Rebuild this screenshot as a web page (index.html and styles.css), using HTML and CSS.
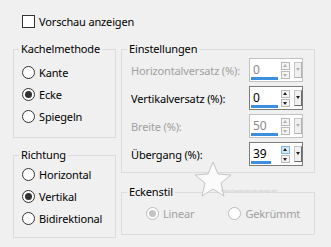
FILE: index.html
```html
<!DOCTYPE html>
<html lang="de">
<head>
    <meta charset="UTF-8">
    <title>Kacheln</title>
    <link rel="stylesheet" href="styles.css">
</head>
<body>
    <div class="dialog">
        <label class="check-row">
            <span class="box"></span>
            <span>Vorschau anzeigen</span>
        </label>

        <div class="columns">
            <div class="col-left">
                <fieldset class="group tiling">
                    <legend>Kachelmethode</legend>
                    <div class="inner">
                        <div class="radio-row"><span class="radio"></span>Kante</div>
                        <div class="radio-row"><span class="radio on"></span>Ecke</div>
                        <div class="radio-row"><span class="radio"></span>Spiegeln</div>
                    </div>
                </fieldset>

                <fieldset class="group direction">
                    <legend>Richtung</legend>
                    <div class="inner">
                        <div class="radio-row"><span class="radio"></span>Horizontal</div>
                        <div class="radio-row"><span class="radio on"></span>Vertikal</div>
                        <div class="radio-row"><span class="radio"></span>Bidirektional</div>
                    </div>
                </fieldset>
            </div>

            <div class="col-right">
                <fieldset class="group settings">
                    <legend>Einstellungen</legend>
                    <div class="inner">
                        <div class="setting disabled">
                            <span class="label">Horizontalversatz (%):</span>
                            <div class="spin">
                                <div class="field"><span class="val">0</span><span class="bar" style="width:27px"></span></div>
                                <div class="arrows"><span class="up"></span><span class="down"></span></div>
                                <div class="drop"></div>
                            </div>
                        </div>

                        <div class="setting">
                            <span class="label">Vertikalversatz (%):</span>
                            <div class="spin">
                                <div class="field"><span class="val">0</span><span class="bar" style="width:27px"></span></div>
                                <div class="arrows"><span class="up"></span><span class="down"></span></div>
                                <div class="drop"></div>
                            </div>
                        </div>

                        <div class="setting disabled">
                            <span class="label">Breite (%):</span>
                            <div class="spin">
                                <div class="field"><span class="val">50</span><span class="bar" style="width:27px"></span></div>
                                <div class="arrows"><span class="up"></span><span class="down"></span></div>
                                <div class="drop"></div>
                            </div>
                        </div>

                        <div class="setting">
                            <span class="label">Übergang (%):</span>
                            <div class="spin">
                                <div class="field"><span class="val">39</span><span class="bar" style="width:20px"></span></div>
                                <div class="arrows"><span class="up hot"></span><span class="down"></span></div>
                                <div class="drop"></div>
                            </div>
                        </div>
                    </div>
                </fieldset>

                <fieldset class="group corner">
                    <legend>Eckenstil</legend>
                    <div class="inner corner-row">
                        <div class="radio-row off"><span class="radio on"></span>Linear</div>
                        <div class="radio-row off"><span class="radio"></span>Gekrümmt</div>
                    </div>
                </fieldset>
            </div>
        </div>

        <!-- Wasserzeichen -->
        <div class="mark">
            <svg width="40" height="38" viewBox="0 0 40 38">
                <polygon points="20,2 25,14 38,15 28,23 31,36 20,29 9,36 12,23 2,15 15,14"
                         fill="#fbfbfb" stroke="#c4c4c4" stroke-width="1"/>
            </svg>
            <span class="mark-text">https://www.tutorials-design.de/</span>
        </div>
    </div>
</body>
</html>
```

FILE: styles.css
```css
body {
    margin: 0;
    background-color: #f0f0f0;
    font-family: "Noto Sans", sans-serif;
    font-size: 11px;
    letter-spacing: -0.15px;
    color: #000;
}
.dialog {
    position: relative;
    padding: 14px 0 0 13px;
}
.check-row {
    display: flex;
    align-items: center;
    gap: 4px;
    height: 14px;
    margin-left: 9px;
}
.box {
    width: 11px;
    height: 11px;
    border: 1px solid #333;
    background-color: #fff;
}
.columns {
    display: flex;
    gap: 5px;
    margin-top: 13px;
}
.col-left {
    width: 103px;
}
.col-right {
    width: 194px;
}
.group {
    margin: 0;
    border: 1px solid #dcdcdc;
    padding: 0;
}
.group legend {
    padding: 0 2px;
    margin-left: 5px;
    line-height: 16px;
}
.tiling .inner {
    padding: 4px 0 10px 8px;
}
.direction {
    margin-top: 9px;
}
.direction .inner {
    padding: 0 0 8px 8px;
}
.radio-row {
    display: flex;
    align-items: center;
    gap: 4px;
    height: 22px;
}
.radio {
    width: 11px;
    height: 11px;
    border: 1px solid #333;
    border-radius: 50%;
    background-color: #fff;
    display: flex;
    align-items: center;
    justify-content: center;
}
.radio.on::after {
    content: "";
    width: 7px;
    height: 7px;
    border-radius: 50%;
    background-color: #333;
}
.radio-row.off {
    color: #a0a0a0;
}
.radio-row.off .radio {
    border-color: #bcbcbc;
}
.radio-row.off .radio.on::after {
    background-color: #c4c4c4;
}
.settings .inner {
    padding: 1px 11px 6px 9px;
}
.setting {
    display: flex;
    align-items: center;
    justify-content: space-between;
    height: 24px;
    margin-bottom: 4px;
}
.setting:last-child {
    margin-bottom: 0;
}
.setting.disabled .label {
    color: #a0a0a0;
}
.spin {
    display: flex;
    align-items: center;
    width: 52px;
    height: 22px;
    border: 1px solid #7a7a7a;
    background-color: #fff;
}
.setting.disabled .spin {
    border-color: #c2c2c2;
}
.setting.disabled .val {
    color: #8a8a8a;
}
.field {
    position: relative;
    width: 32px;
    height: 22px;
}
.val {
    position: absolute;
    left: 3px;
    top: 3px;
    line-height: 16px;
    font-size: 12px;
    letter-spacing: 0;
}
.bar {
    position: absolute;
    left: 1px;
    bottom: 1px;
    height: 3px;
    background-color: #3d8fe0;
}
.arrows {
    display: flex;
    flex-direction: column;
    gap: 1px;
    margin-left: 1px;
}
.arrows span {
    width: 7px;
    height: 6px;
    border: 1px solid #b9b9b9;
    background-color: #f4f4f4;
    position: relative;
}
.arrows span.hot {
    background-color: #d8eaf9;
    border-color: #7eb4ea;
}
.arrows span::after {
    content: "";
    position: absolute;
    left: 1px;
    border-left: 2.5px solid transparent;
    border-right: 2.5px solid transparent;
}
.up::after {
    top: 1px;
    border-bottom: 3px solid #222;
}
.down::after {
    top: 2px;
    border-top: 3px solid #222;
}
.setting.disabled .up::after {
    border-bottom-color: #b0b0b0;
}
.setting.disabled .down::after {
    border-top-color: #b0b0b0;
}
.drop {
    width: 7px;
    height: 14px;
    margin-left: 4px;
    border: 1px solid #c8c8c8;
    border-right-color: #6a6a6a;
    border-bottom-color: #6a6a6a;
    background-color: #f0f0f0;
    position: relative;
}
.drop::after {
    content: "";
    position: absolute;
    left: 1px;
    top: 5px;
    border-left: 2.5px solid transparent;
    border-right: 2.5px solid transparent;
    border-top: 3px solid #222;
}
.setting.disabled .drop {
    border-right-color: #b0b0b0;
    border-bottom-color: #b0b0b0;
}
.setting.disabled .drop::after {
    border-top-color: #b0b0b0;
}
.corner {
    margin-top: 11px;
}
.corner .inner {
    padding: 2px 0 10px 24px;
}
.corner-row {
    display: flex;
    gap: 34px;
}
.mark {
    position: absolute;
    left: 193px;
    top: 160px;
    width: 120px;
}
.mark svg {
    display: block;
}
.mark-text {
    position: absolute;
    left: 28px;
    top: 28px;
    font-size: 4px;
    color: #c8c8c8;
}
```
